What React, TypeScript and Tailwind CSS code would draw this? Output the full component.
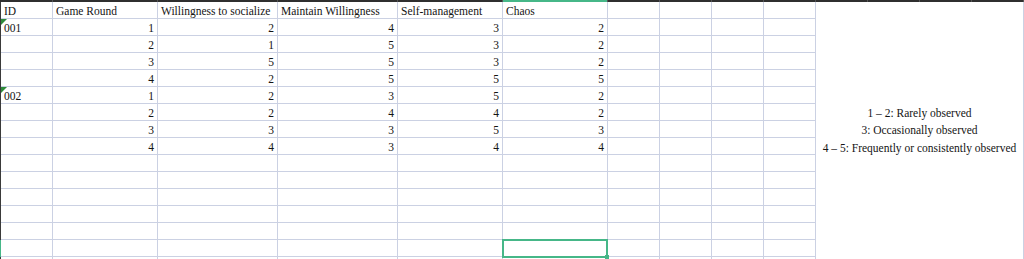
import clsx from 'clsx';

const cols = [52, 105, 120, 120, 105, 105, 52, 52, 52, 52];
const headers = ['ID', 'Game Round', 'Willingness to socialize', 'Maintain Willingness', 'Self-management', 'Chaos'];

type Row = { id?: string; values: number[] };

const rows: Row[] = [
  { id: '001', values: [1, 2, 4, 3, 2] },
  { values: [2, 1, 5, 3, 2] },
  { values: [3, 5, 5, 3, 2] },
  { values: [4, 2, 5, 5, 5] },
  { id: '002', values: [1, 2, 3, 5, 2] },
  { values: [2, 2, 4, 4, 2] },
  { values: [3, 3, 3, 5, 3] },
  { values: [4, 4, 3, 4, 4] },
];

const emptyRows = 7;
const selectedRow = 13;

const legend = ['1 – 2: Rarely observed', '3: Occasionally observed', '4 – 5: Frequently or consistently observed'];

function Cell(props: { width: number; children?: React.ReactNode; right?: boolean; selected?: boolean; marker?: boolean }) {
  const { width, children, right, selected, marker } = props;
  return (
    <div
      style={{ width }}
      className={clsx(
        'relative h-[17px] shrink-0 whitespace-nowrap border-b border-r border-[#cbd1e3] px-[3px] pt-px leading-[17px]',
        right && 'text-right',
        selected && 'z-10',
      )}
    >
      {marker && (
        <span className="absolute left-0 top-0 h-0 w-0 border-l-[3px] border-t-[3px] border-r-[3px] border-b-[3px] border-l-[#2e8b3a] border-t-[#2e8b3a] border-r-transparent border-b-transparent" />
      )}
      {children}
      {selected && (
        <span className="absolute -left-px -top-px bottom-[-2px] right-[-1px] border-2 border-[#46b788]">
          <span className="absolute -bottom-[3px] -right-[3px] h-[4px] w-[4px] bg-[#46b788]" />
        </span>
      )}
    </div>
  );
}

export default function App() {
  const total = rows.length + emptyRows;

  return (
    <div className="h-[259px] w-[1024px] overflow-hidden bg-white font-['Liberation_Serif',serif] text-[11.5px] text-[#141414]">
      {/* column header strip */}
      <div className="flex h-[2px] bg-[#2f2f2f]">
        <div className="w-px shrink-0" />
        {[...cols, 52, 52, 52, 52].map((w, i) => (
          <div key={i} style={{ width: w }} className={clsx('shrink-0 border-r border-[#555]', i === 5 && 'bg-[#46b788]')} />
        ))}
      </div>

      <div className="flex">
        {/* row header strip */}
        <div className="flex w-px shrink-0 flex-col bg-[#3a3a3a]">
          <div className="h-[17px]" />
          {Array.from({ length: total }).map((_, i) => (
            <div key={i} className={clsx('h-[17px]', i === selectedRow && 'bg-[#46b788]')} />
          ))}
        </div>

        <div className="flex flex-col">
          <div className="flex">
            {cols.map((w, i) => (
              <Cell key={i} width={w}>
                {headers[i]}
              </Cell>
            ))}
          </div>
          {rows.map((r, i) => (
            <div key={i} className="flex">
              <Cell width={cols[0]} marker={!!r.id}>
                {r.id}
              </Cell>
              {r.values.map((v, j) => (
                <Cell key={j} width={cols[j + 1]} right>
                  {v}
                </Cell>
              ))}
              {cols.slice(6).map((w, j) => (
                <Cell key={j} width={w} />
              ))}
            </div>
          ))}
          {Array.from({ length: emptyRows + 1 }).map((_, i) => (
            <div key={i} className="relative flex">
              {cols.map((w, j) => (
                <Cell key={j} width={w} selected={j === 5 && i + rows.length === selectedRow} />
              ))}
            </div>
          ))}
        </div>

        {/* merged legend cell */}
        <div className="flex h-[257px] w-[208px] shrink-0 flex-col items-center justify-center border-r border-[#cbd1e3] pt-px leading-[17.5px]">
          {legend.map((t) => (
            <div key={t}>{t}</div>
          ))}
        </div>
      </div>
    </div>
  );
}
